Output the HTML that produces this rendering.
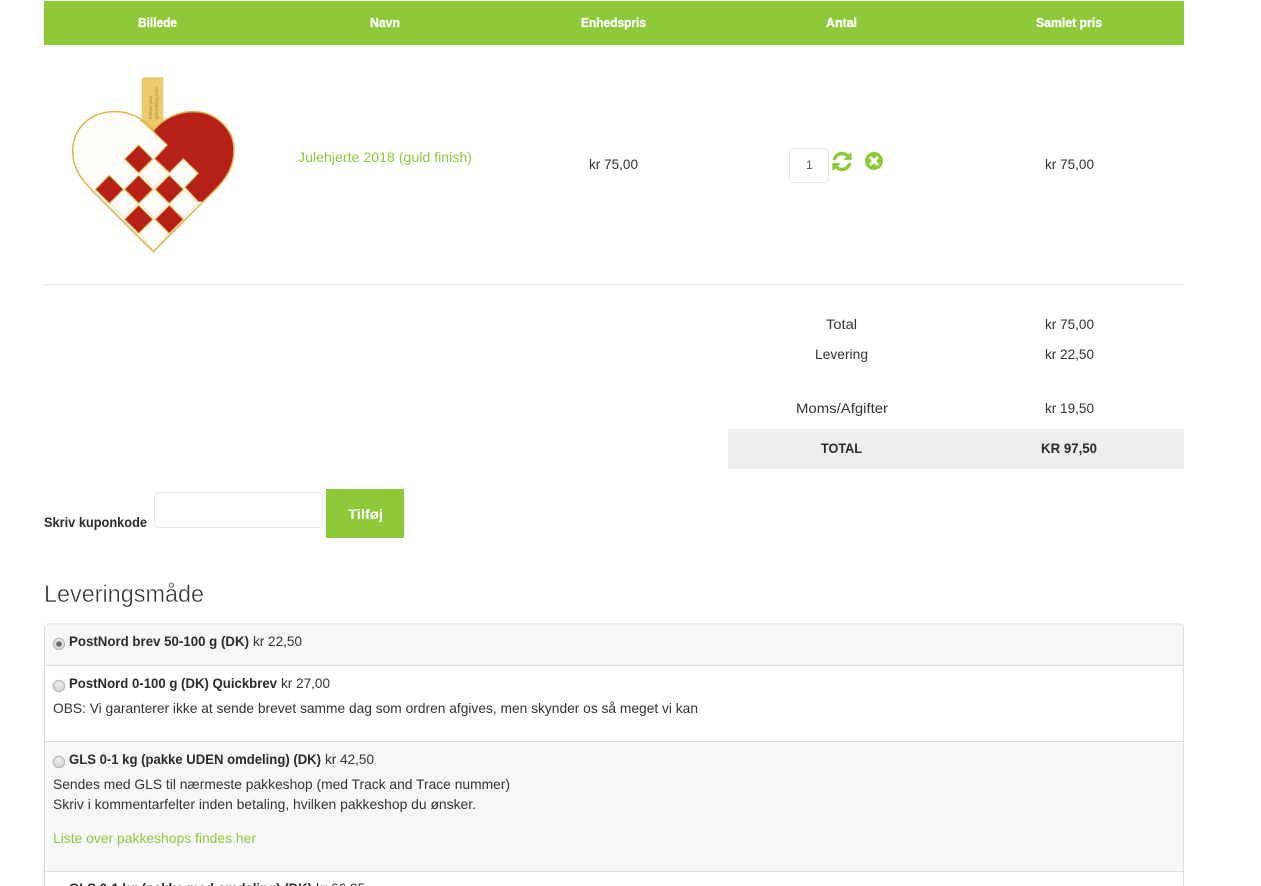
<!DOCTYPE html>
<html lang="da">
<head>
<meta charset="utf-8">
<title>Indkøbskurv</title>
<style>
html,body{margin:0;padding:0;background:#fff;width:1261px;height:886px;overflow:hidden}
svg{display:block;position:absolute;left:0;top:0}
text{font-family:"Liberation Sans",sans-serif;font-size:14px;fill:#333}
.b{font-weight:bold;fill:#2b2b2b}
.h{font-weight:bold;fill:#fff;font-size:12.5px;stroke:#fff;stroke-width:.35px}
.g{fill:#8ec93a}
</style>
</head>
<body>
<svg width="1261" height="886" viewBox="0 0 1261 886" xmlns="http://www.w3.org/2000/svg">
<defs>
<radialGradient id="rad" cx="50%" cy="35%" r="70%"><stop offset="0" stop-color="#f0f0f0"/><stop offset="1" stop-color="#cfcfcf"/></radialGradient>
<clipPath id="hc"><path d="M310 212C280 175 240 155 195 155C120 155 68 205 68 275C68 330 100 365 135 400L310 575L490 395C525 360 552 325 552 270C552 205 495 155 430 155C385 155 340 175 310 212Z"/></clipPath>
</defs>

<rect x="44" y="1" width="1140" height="44" fill="#8ec93a"/>
<text class="h" x="138" y="27" textLength="39" lengthAdjust="spacingAndGlyphs">Billede</text>
<text class="h" x="370" y="27" textLength="30" lengthAdjust="spacingAndGlyphs">Navn</text>
<text class="h" x="581" y="27" textLength="65" lengthAdjust="spacingAndGlyphs">Enhedspris</text>
<text class="h" x="826" y="27" textLength="31" lengthAdjust="spacingAndGlyphs">Antal</text>
<text class="h" x="1036" y="27" textLength="66" lengthAdjust="spacingAndGlyphs">Samlet pris</text>

<g transform="translate(50 60) scale(.3333)">
<rect x="275" y="52" width="65" height="165" rx="3" fill="#ebcb6c"/>
<text transform="translate(306 178) rotate(-90)" style="font-size:14px;fill:#a5862f">Follow your</text>
<text transform="translate(324 178) rotate(-90)" style="font-size:14px;fill:#a5862f">gernerking.com</text>
<path d="M310 212C280 175 240 155 195 155C120 155 68 205 68 275C68 330 100 365 135 400L310 575L490 395C525 360 552 325 552 270C552 205 495 155 430 155C385 155 340 175 310 212Z" fill="#fdfcf8"/>
<g clip-path="url(#hc)">
<path d="M310 212L352 255L314 296L358 338L400 296L445 340L405 382L445 425L600 425L600 100L310 100Z" fill="#b62016"/>
<g fill="none" stroke="#eedcaa" stroke-width="2">
<path d="M222 388L264 430L222 472L180 430Z"/>
<path d="M312 298L355 340L312 384L270 340Z"/>
<path d="M312 388L355 430L312 474L270 430Z"/>
<path d="M400 388L445 430L400 474L358 430Z"/>
<path d="M312 478L355 520L312 575L270 520Z"/>
</g>
</g>
<g fill="#b62016" stroke="#e0bb55" stroke-width="3">
<path d="M266 255L308 297L266 339L224 297Z"/>
<path d="M178 346L220 388L178 430L136 388Z"/>
<path d="M266 346L308 388L266 430L224 388Z"/>
<path d="M358 346L400 388L358 430L316 388Z"/>
<path d="M266 436L308 478L266 520L224 478Z"/>
<path d="M358 436L400 478L358 520L316 478Z"/>
</g>
<path d="M270 178L352 255L314 296L358 338L400 296L445 340L405 382L445 425" fill="none" stroke="#e0bb55" stroke-width="3"/>
<path d="M310 212C280 175 240 155 195 155C120 155 68 205 68 275C68 330 100 365 135 400L310 575L490 395C525 360 552 325 552 270C552 205 495 155 430 155C385 155 340 175 310 212Z" fill="none" stroke="#dcb44a" stroke-width="4.500"/>
</g>

<text class="g" x="298" y="162" textLength="174" lengthAdjust="spacingAndGlyphs">Julehjerte 2018 (guld finish)</text>
<text x="589" y="169" textLength="49" lengthAdjust="spacingAndGlyphs">kr 75,00</text>
<rect x="789.5" y="148.5" width="39" height="34" rx="4" fill="#fff" stroke="#e8e8e8"/>
<text x="806" y="169" style="font-size:12px;fill:#555">1</text>
<g transform="translate(832.500 152) scale(.01237)" fill="#8ec93a" stroke="#8ec93a" stroke-width="30">
<path d="M1511 928q0 5-1 7-64 268-268 434.500t-478 166.500q-146 0-282.500-55t-243.500-157l-129 129q-19 19-45 19t-45-19-19-45v-448q0-26 19-45t45-19h448q26 0 45 19t19 45-19 45l-137 137q71 66 161 102t187 36q134 0 250-65t186-179q11-17 53-117 8-23 30-23h192q13 0 22.500 9.500t9.500 22.500zm25-800v448q0 26-19 45t-45 19h-448q-26 0-45-19t-19-45 19-45l138-138q-148-137-349-137-134 0-250 65t-186 179q-11 17-53 117-8 23-30 23h-199q-13 0-22.500-9.500t-9.500-22.500v-7q65-268 270-434.500t480-166.500q146 0 284 55.500t245 156.500l130-129q19-19 45-19t45 19 19 45z"/>
</g>
<circle cx="874" cy="161" r="9" fill="#8ec93a"/>
<path d="M871 158L877 164M877 158L871 164" stroke="#fff" stroke-width="3" stroke-linecap="round"/>
<text x="1045" y="169" textLength="49" lengthAdjust="spacingAndGlyphs">kr 75,00</text>

<rect x="44" y="284" width="1140" height="1" fill="#e6e6e6"/>

<text x="826" y="329" textLength="31" lengthAdjust="spacingAndGlyphs">Total</text>
<text x="1045" y="329" textLength="49" lengthAdjust="spacingAndGlyphs">kr 75,00</text>
<text x="815" y="359" textLength="53" lengthAdjust="spacingAndGlyphs">Levering</text>
<text x="1045" y="359" textLength="49" lengthAdjust="spacingAndGlyphs">kr 22,50</text>
<text x="796" y="413" textLength="92" lengthAdjust="spacingAndGlyphs">Moms/Afgifter</text>
<text x="1045" y="413" textLength="49" lengthAdjust="spacingAndGlyphs">kr 19,50</text>
<rect x="728" y="429" width="456" height="40" fill="#eeeeee"/>
<text class="b" x="821" y="453" textLength="41" lengthAdjust="spacingAndGlyphs">TOTAL</text>
<text class="b" x="1041" y="453" textLength="56" lengthAdjust="spacingAndGlyphs">KR 97,50</text>

<text class="b" x="44" y="527" textLength="103" lengthAdjust="spacingAndGlyphs">Skriv kuponkode</text>
<rect x="154.500" y="492.500" width="168" height="35" rx="4" fill="#fff" stroke="#e8e8e8"/>
<rect x="326" y="489" width="78" height="49" fill="#8ec93a"/>
<text x="348" y="519" textLength="35" lengthAdjust="spacingAndGlyphs" style="font-weight:bold;fill:#fff">Tilføj</text>

<text x="44" y="602" textLength="160" lengthAdjust="spacingAndGlyphs" style="font-size:24px;fill:#333;stroke:#fff;stroke-width:.45px;paint-order:fill stroke">Leveringsmåde</text>

<path d="M44.500 886V627a3 3 0 0 1 3-3H1180.500a3 3 0 0 1 3 3V886" fill="#fff" stroke="#dddddd"/>
<rect x="45" y="625" width="1138" height="40" fill="#f8f8f8"/>
<rect x="45" y="665" width="1138" height="1" fill="#dddddd"/>
<rect x="45" y="741" width="1138" height="1" fill="#dddddd"/>
<rect x="45" y="742" width="1138" height="129" fill="#f8f8f8"/>
<rect x="45" y="871" width="1138" height="1" fill="#dddddd"/>

<circle cx="59" cy="644" r="5.700" fill="url(#rad)" stroke="#b5b5b5"/>
<circle cx="59" cy="644" r="2.800" fill="#666"/>
<text class="b" x="69" y="646" textLength="180" lengthAdjust="spacingAndGlyphs">PostNord brev 50-100 g (DK)</text>
<text x="253" y="646" textLength="49" lengthAdjust="spacingAndGlyphs">kr 22,50</text>

<circle cx="59" cy="686" r="5.700" fill="url(#rad)" stroke="#b5b5b5"/>
<text class="b" x="69" y="688" textLength="208" lengthAdjust="spacingAndGlyphs">PostNord 0-100 g (DK) Quickbrev</text>
<text x="281" y="688" textLength="49" lengthAdjust="spacingAndGlyphs">kr 27,00</text>
<text x="53" y="713" textLength="645" lengthAdjust="spacingAndGlyphs">OBS: Vi garanterer ikke at sende brevet samme dag som ordren afgives, men skynder os så meget vi kan</text>

<circle cx="59" cy="762" r="5.700" fill="url(#rad)" stroke="#b5b5b5"/>
<text class="b" x="69" y="764" textLength="252" lengthAdjust="spacingAndGlyphs">GLS 0-1 kg (pakke UDEN omdeling) (DK)</text>
<text x="325" y="764" textLength="49" lengthAdjust="spacingAndGlyphs">kr 42,50</text>
<text x="53" y="789" textLength="457" lengthAdjust="spacingAndGlyphs">Sendes med GLS til nærmeste pakkeshop (med Track and Trace nummer)</text>
<text x="53" y="809" textLength="423" lengthAdjust="spacingAndGlyphs">Skriv i kommentarfelter inden betaling, hvilken pakkeshop du ønsker.</text>
<text class="g" x="53" y="843" textLength="203" lengthAdjust="spacingAndGlyphs">Liste over pakkeshops findes her</text>

<text class="b" x="69" y="893" textLength="243" lengthAdjust="spacingAndGlyphs">GLS 0-1 kg (pakke med omdeling) (DK)</text>
<text x="316" y="893" textLength="49" lengthAdjust="spacingAndGlyphs">kr 66,25</text>
</svg>
</body>
</html>
